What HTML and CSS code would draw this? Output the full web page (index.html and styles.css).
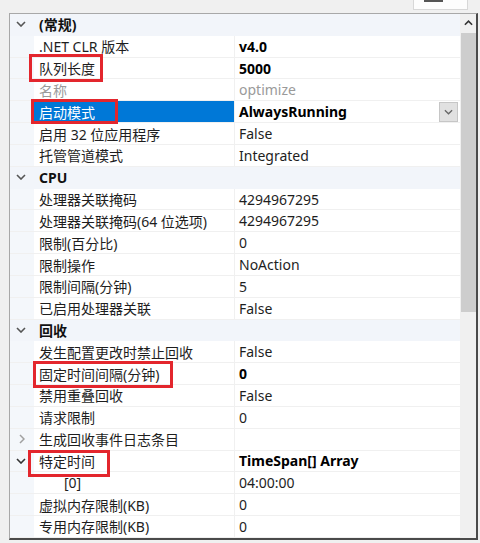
FILE: index.html
```html
<!DOCTYPE html>
<html lang="zh-CN">
<head>
<meta charset="utf-8">
<link rel="stylesheet" href="styles.css">
</head>
<body>
<div class="topbar"><div class="topbtn"><div class="topbtn-bar"></div></div></div>
<div class="panel">
  <div class="grid">
    <div class="row cat"><span class="gut"><svg class="chev" viewBox="0 0 10 6"><polyline points="1,1 5,5 9,1"/></svg></span><span class="title">(常规)</span></div>
    <div class="row"><span class="gut"></span><span class="name">.NET CLR 版本</span><span class="val b">v4.0</span></div>
    <div class="row"><span class="gut"></span><span class="name">队列长度</span><span class="val b">5000</span></div>
    <div class="row dis"><span class="gut"></span><span class="name">名称</span><span class="val">optimize</span></div>
    <div class="row"><span class="gut"></span><span class="name sel">启动模式</span><span class="val b drop">AlwaysRunning<span class="ddbtn"><svg viewBox="0 0 10 6"><polyline points="1,1 5,5 9,1"/></svg></span></span></div>
    <div class="row"><span class="gut"></span><span class="name">启用 32 位应用程序</span><span class="val">False</span></div>
    <div class="row"><span class="gut"></span><span class="name">托管管道模式</span><span class="val">Integrated</span></div>
    <div class="row cat"><span class="gut"><svg class="chev" viewBox="0 0 10 6"><polyline points="1,1 5,5 9,1"/></svg></span><span class="title">CPU</span></div>
    <div class="row"><span class="gut"></span><span class="name">处理器关联掩码</span><span class="val">4294967295</span></div>
    <div class="row"><span class="gut"></span><span class="name">处理器关联掩码(64 位选项)</span><span class="val">4294967295</span></div>
    <div class="row"><span class="gut"></span><span class="name">限制(百分比)</span><span class="val">0</span></div>
    <div class="row"><span class="gut"></span><span class="name">限制操作</span><span class="val">NoAction</span></div>
    <div class="row"><span class="gut"></span><span class="name">限制间隔(分钟)</span><span class="val">5</span></div>
    <div class="row"><span class="gut"></span><span class="name">已启用处理器关联</span><span class="val">False</span></div>
    <div class="row cat"><span class="gut"><svg class="chev" viewBox="0 0 10 6"><polyline points="1,1 5,5 9,1"/></svg></span><span class="title">回收</span></div>
    <div class="row"><span class="gut"></span><span class="name">发生配置更改时禁止回收</span><span class="val">False</span></div>
    <div class="row"><span class="gut"></span><span class="name">固定时间间隔(分钟)</span><span class="val b">0</span></div>
    <div class="row"><span class="gut"></span><span class="name">禁用重叠回收</span><span class="val">False</span></div>
    <div class="row"><span class="gut"></span><span class="name">请求限制</span><span class="val">0</span></div>
    <div class="row"><span class="gut"><svg class="chev-r" viewBox="0 0 6 10"><polyline points="1,1 5,5 1,9"/></svg></span><span class="name">生成回收事件日志条目</span><span class="val"></span></div>
    <div class="row"><span class="gut"><svg class="chev dark" viewBox="0 0 10 6"><polyline points="1,1 5,5 9,1"/></svg></span><span class="name">特定时间</span><span class="val b">TimeSpan[] Array</span></div>
    <div class="row"><span class="gut"></span><span class="name sub">[0]</span><span class="val">04:00:00</span></div>
    <div class="row"><span class="gut"></span><span class="name">虚拟内存限制(KB)</span><span class="val">0</span></div>
    <div class="row"><span class="gut"></span><span class="name">专用内存限制(KB)</span><span class="val">0</span></div>
  </div>
  <div class="scroll">
    <div class="sc-up"><svg viewBox="0 0 10 6"><polyline points="1,5 5,1 9,5"/></svg></div>
    <div class="sc-thumb"></div>
  </div>
</div>
<div class="mark m1"></div>
<div class="mark m2"></div>
<div class="mark m3"></div>
<div class="mark m4"></div>
</body>
</html>
```

FILE: styles.css
```css
* { box-sizing: border-box; }
html, body { margin: 0; padding: 0; }
body {
  width: 480px;
  height: 543px;
  background: #f0f0f0;
  font-family: "Noto Sans", "Noto Sans CJK SC", sans-serif;
  font-size: 14px;
  color: #1e1e1e;
  overflow: hidden;
  position: relative;
}
.topbar {
  height: 13px;
  display: flex;
  padding-left: 413px;
}
.topbtn {
  width: 55px;
  height: 10px;
  background: #fdfdfd;
  border: 1px solid #d8d8d8;
  border-top: none;
  padding-left: 10px;
}
.topbtn-bar {
  width: 19px;
  height: 2px;
  background: #555;
}
.panel {
  margin-left: 9px;
  width: 469px;
  height: 527px;
  border-top: 1px solid #a8a8a8;
  border-left: 1px solid #a8a8a8;
  border-right: 2px solid #4a4a4a;
  border-bottom: 2px solid #4a4a4a;
  background: #fff;
  display: flex;
}
.grid {
  width: 450px;
  display: flex;
  flex-direction: column;
}
.row {
  height: calc(524px / 24);
  display: grid;
  grid-template-columns: 24px 200px 226px;
  align-items: stretch;
  border-bottom: 1px solid #f0f0f0;
  white-space: nowrap;
}
.row > span {
  display: flex;
  align-items: center;
  overflow: hidden;
}
.gut {
  background: #f4f7fb;
  justify-content: center;
}
.name {
  padding-left: 5px;
}
.name.sub { padding-left: 30px; }
.name.sel {
  background: #0078d7;
  color: #fff;
}
.val {
  padding-left: 4px;
  border-left: 1px solid #f0f0f0;
}
.b { font-weight: bold; color: #000; }
.dis .name, .dis .val { color: #9a9a9a; }
.cat {
  background: #f2f5fa;
  grid-template-columns: 24px 426px;
  border-bottom: 1px solid #f2f5fa;
}
.cat .gut { background: transparent; }
.title {
  padding-left: 5px;
  font-weight: bold;
  color: #111;
}
.chev {
  width: 10px;
  height: 6px;
  margin-left: -3px;
  fill: none;
  stroke: #555;
  stroke-width: 1.6;
}
.chev.dark { stroke: #333; margin-left: -2px; }
.chev-r {
  width: 6px;
  height: 10px;
  fill: none;
  stroke: #a0a0a0;
  stroke-width: 1.5;
}
.drop {
  justify-content: space-between;
  padding-right: 2px;
}
.ddbtn {
  width: 19px;
  height: 20px;
  background: #e1e1e1;
  border: 1px solid #c6c6c6;
  display: flex;
  align-items: center;
  justify-content: center;
}
.ddbtn svg {
  width: 9px;
  height: 6px;
  fill: none;
  stroke: #666;
  stroke-width: 1.4;
}
.scroll {
  width: 16px;
  background: #f0f0f0;
  display: flex;
  flex-direction: column;
  align-items: center;
}
.sc-up {
  height: 18px;
  width: 16px;
  display: flex;
  align-items: center;
  justify-content: center;
}
.sc-up svg {
  width: 9px;
  height: 6px;
  fill: none;
  stroke: #333;
  stroke-width: 1.8;
}
.sc-thumb {
  margin-top: 1px;
  width: 15px;
  height: 279px;
  background: #cdcdcd;
}
.mark {
  position: absolute;
  border: 3px solid #e3262d;
}
.m1 { left: 29px; top: 54px; width: 74px; height: 28px; }
.m2 { left: 31px; top: 99px; width: 87px; height: 25px; }
.m3 { left: 33px; top: 361px; width: 140px; height: 27px; }
.m4 { left: 28px; top: 450px; width: 82px; height: 27px; }
```
